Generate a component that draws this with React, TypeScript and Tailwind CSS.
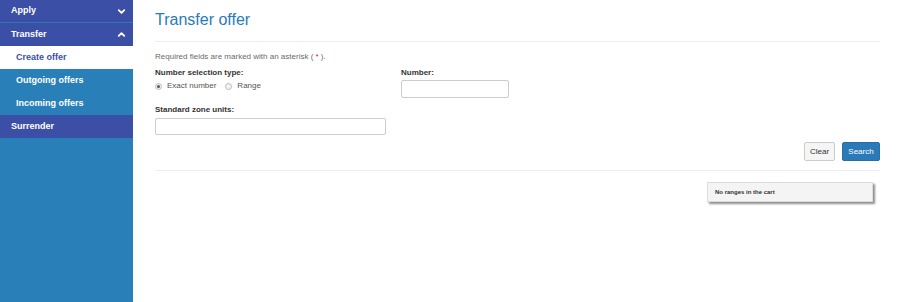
import { ChevronDown, ChevronUp } from 'lucide-react';

const menu = [
    { label: 'Apply', kind: 'head', icon: 'down' },
    { label: 'Transfer', kind: 'head', icon: 'up' },
    { label: 'Create offer', kind: 'active' },
    { label: 'Outgoing offers', kind: 'sub' },
    { label: 'Incoming offers', kind: 'sub' },
    { label: 'Surrender', kind: 'head' },
];

function Sidebar() {
    return (
        <aside className="w-[133px] shrink-0 bg-[#2980b9] min-h-[302px]">
            {menu.map((item, i) => {
                if (item.kind === 'head') {
                    return (
                        <div
                            key={item.label}
                            className={
                                'h-[23px] bg-[#3b4fa6] text-white font-bold text-[9px] pl-[11px] pr-[6px] flex items-center justify-between ' +
                                (i === 0 ? 'border-b border-[#2b78b9]' : '')
                            }
                        >
                            <span>{item.label}</span>
                            {item.icon === 'down' && <ChevronDown size={11} strokeWidth={4} />}
                            {item.icon === 'up' && <ChevronUp size={11} strokeWidth={4} />}
                        </div>
                    );
                }
                return (
                    <div
                        key={item.label}
                        className={
                            'h-[23px] pl-[16px] flex items-center font-bold text-[9px] ' +
                            (item.kind === 'active' ? 'bg-white text-[#3b4fa6]' : 'text-white')
                        }
                    >
                        {item.label}
                    </div>
                );
            })}
        </aside>
    );
}

export default function App() {
    return (
        <div className="flex w-[900px] h-[302px] bg-white font-['Liberation_Sans',Arial,sans-serif]">
            <Sidebar />
            <main className="flex-1 pl-[22px] pr-[20px]">
                {/* Header */}
                <h1 className="pt-[10px] pb-[11px] text-[16px] leading-[20px] text-[#2a7ab8] border-b border-[#eeeeee]">
                    Transfer offer
                </h1>

                <p className="mt-[9px] text-[8px] leading-[12px] text-[#6a6a6a]">
                    Required fields are marked with an asterisk ( <span className="text-[#e0212b]">*</span> ).
                </p>

                {/* Form */}
                <div className="mt-[4px] grid grid-cols-[246px_1fr]">
                    <div>
                        <div className="text-[8px] leading-[12px] font-bold text-[#333333]">Number selection type:</div>
                        <div className="mt-[1px] h-[12px] flex items-center gap-[9px] text-[8px] text-[#555555]">
                            <label className="flex items-center gap-[5px]">
                                <span className="w-[7px] h-[7px] rounded-full border border-[#bbbbbb] bg-[#f3f3f3] flex items-center justify-center">
                                    <span className="w-[3px] h-[3px] rounded-full bg-[#555555]" />
                                </span>
                                Exact number
                            </label>
                            <label className="flex items-center gap-[5px]">
                                <span className="w-[7px] h-[7px] rounded-full border border-[#bbbbbb] bg-[#f3f3f3]" />
                                Range
                            </label>
                        </div>
                    </div>
                    <div>
                        <div className="text-[8px] leading-[12px] font-bold text-[#333333]">Number:</div>
                        <div className="mt-[1px] w-[108px] h-[18px] border border-[#cccccc] rounded-[2px]" />
                    </div>
                </div>

                <div className="mt-[6px]">
                    <div className="text-[8px] leading-[12px] font-bold text-[#333333]">Standard zone units:</div>
                    <div className="mt-[2px] w-[231px] h-[17px] border border-[#cccccc] rounded-[2px]" />
                </div>

                {/* Actions */}
                <div className="mt-[7px] flex justify-end gap-[7px] pb-[9px] border-b border-[#eeeeee]">
                    <button className="h-[19px] w-[31px] text-[8px] text-[#333333] bg-[#f5f5f5] border border-[#cccccc] rounded-[2px]">
                        Clear
                    </button>
                    <button className="h-[19px] w-[38px] text-[8px] text-white bg-[#2a7ab8] border border-[#2a6ea6] rounded-[2px]">
                        Search
                    </button>
                </div>

                {/* Cart */}
                <div className="mt-[11px] flex justify-end pr-[7px]">
                    <div className="w-[166px] h-[20px] bg-[#f4f4f4] border border-[#dddddd] shadow-[2px_2px_2px_rgba(0,0,0,0.45)] pl-[7px] flex items-center text-[6px] font-bold text-[#333333]">
                        No ranges in the cart
                    </div>
                </div>
            </main>
        </div>
    );
}
